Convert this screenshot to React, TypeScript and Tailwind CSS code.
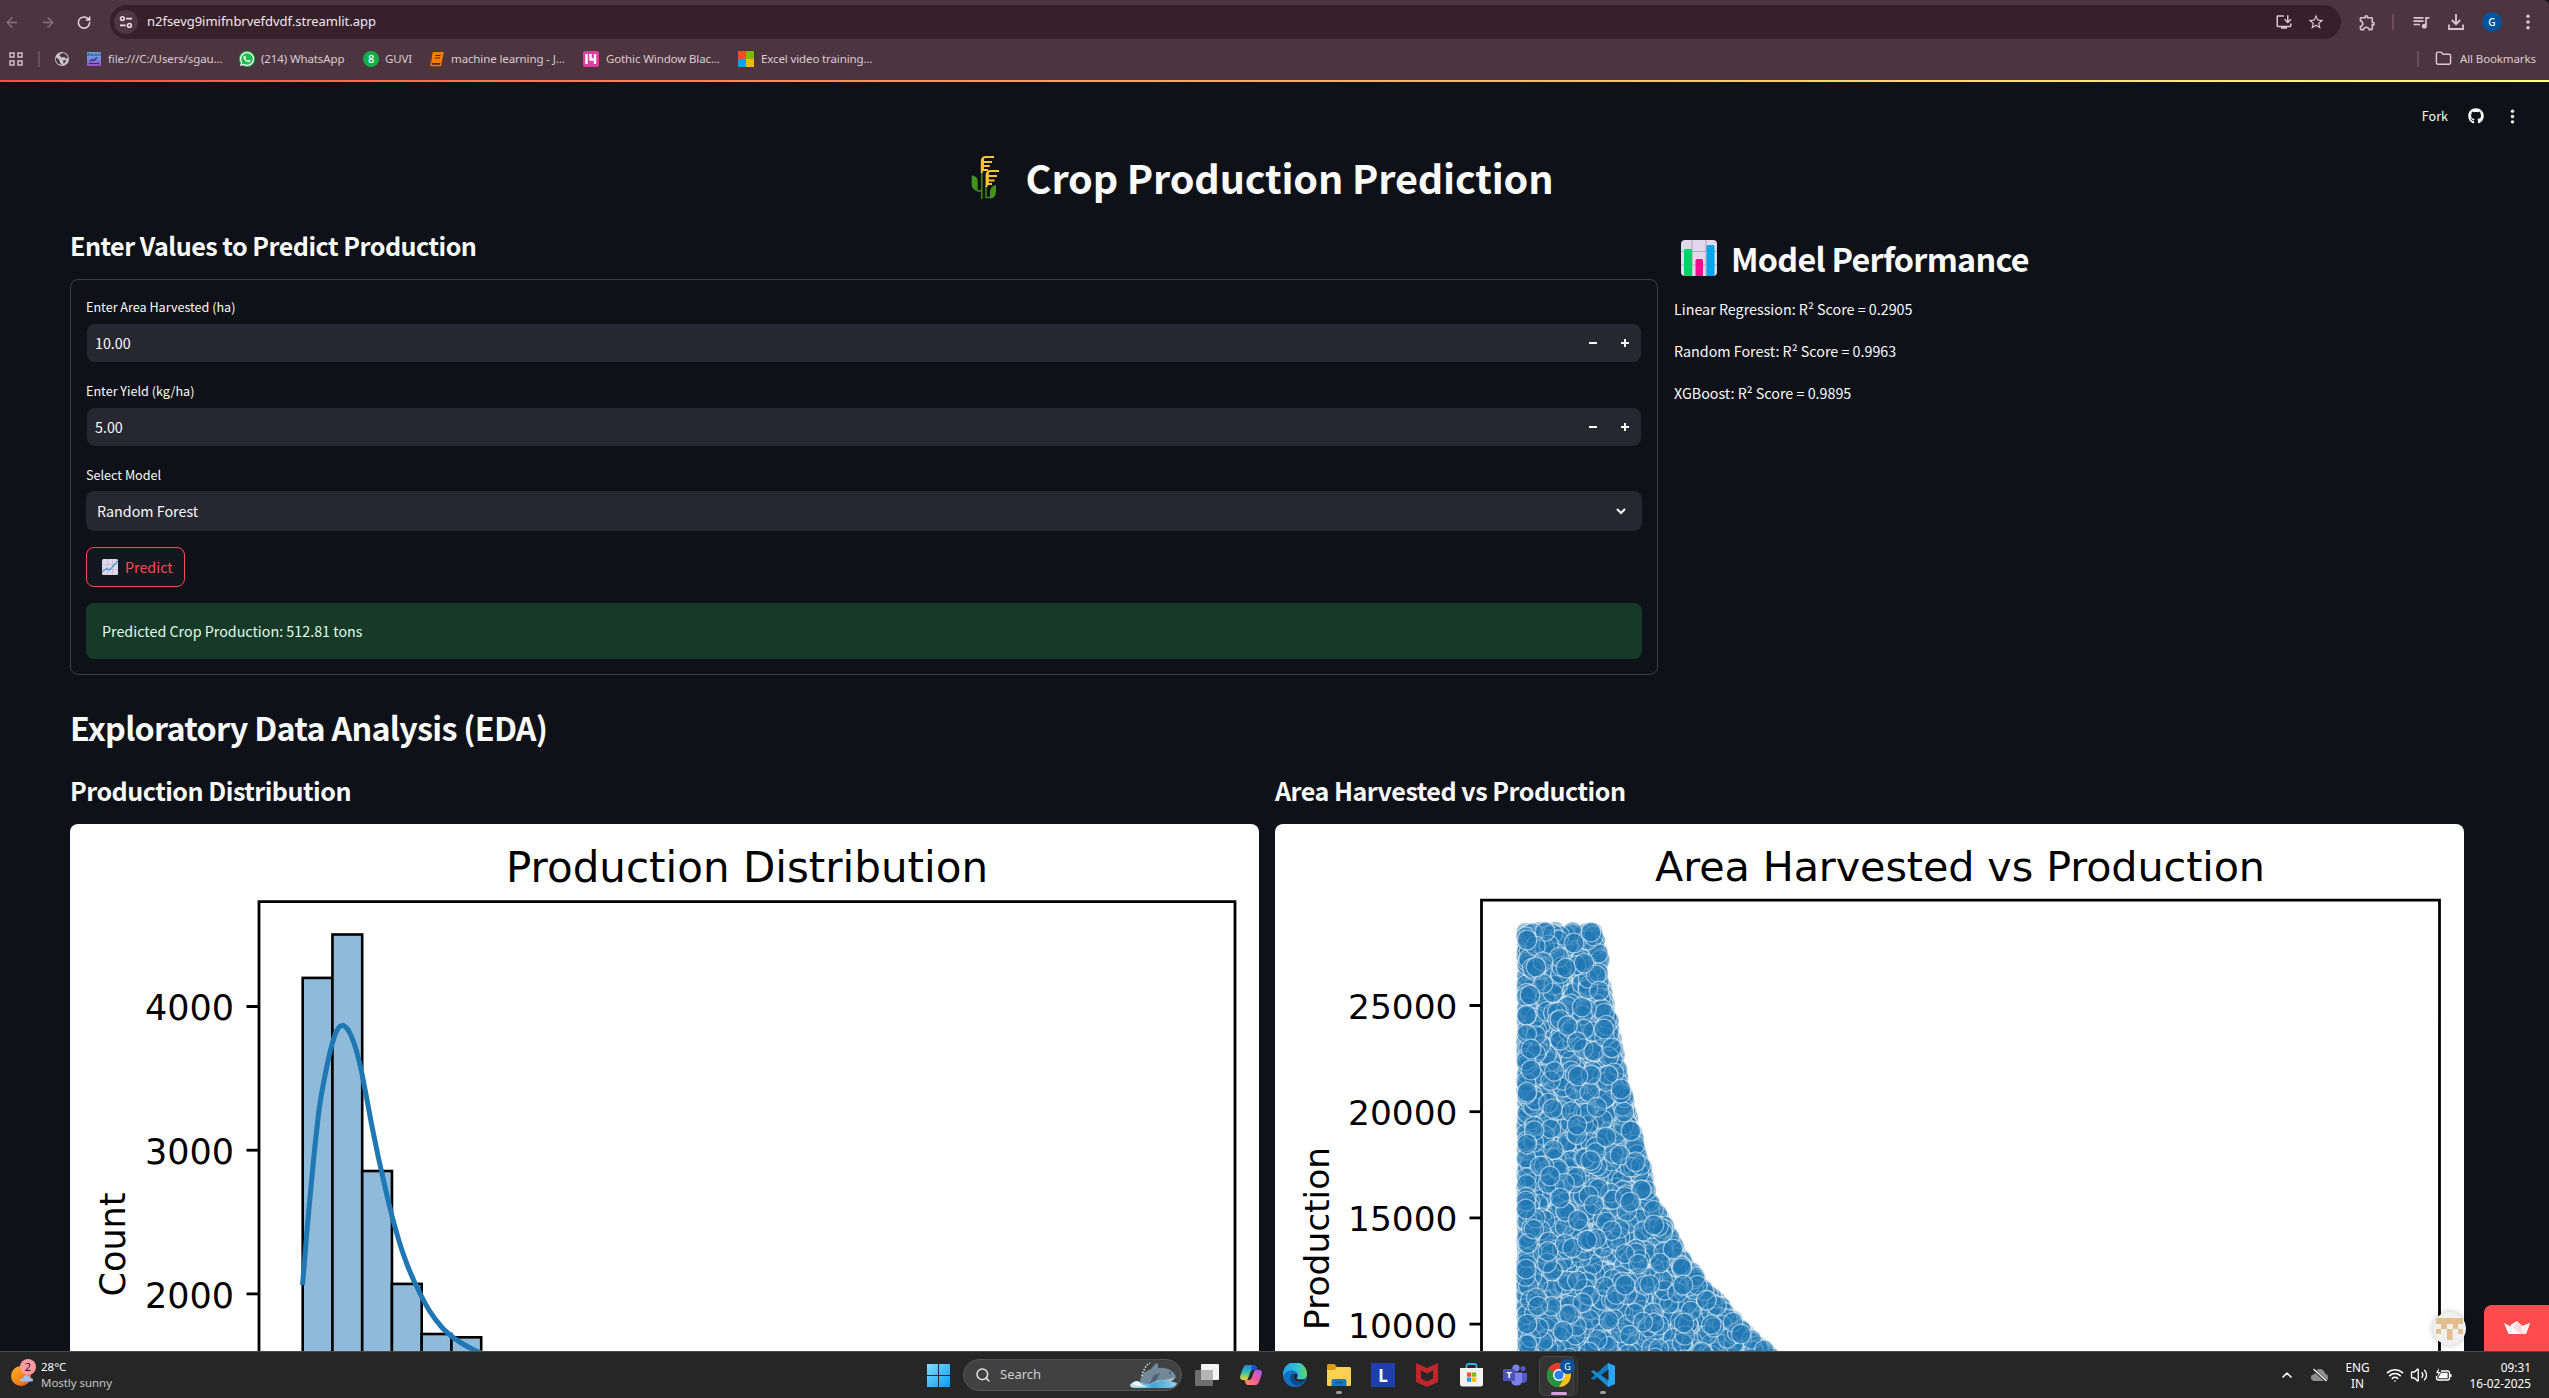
import React from "react";
import { FaWhatsapp, FaGithub } from "react-icons/fa";
import { MdOutlineInstallDesktop, MdStarBorder, MdOutlineExtension, MdQueueMusic } from "react-icons/md";
import { ArrowLeft, ArrowRight, RotateCw, Folder, Search, Wifi, Volume2, ChevronUp } from "lucide-react";

const SANS = "font-['Noto_Sans_CJK_SC','Noto_Sans',sans-serif]";
const UI = "font-['Noto_Sans','Open_Sans',sans-serif]";

function VDots({ className }: { className: string }) {
  return (
    <svg viewBox="0 0 4 16" className={className} fill="currentColor">
      <circle cx="2" cy="2.3" r="1.8" />
      <circle cx="2" cy="8" r="1.8" />
      <circle cx="2" cy="13.7" r="1.8" />
    </svg>
  );
}

/* ---------- Browser chrome ---------- */

function Bookmark({ icon, label, width, gap }: { icon: React.ReactNode; label: string; width: string; gap: string }) {
  return (
    <div className={`flex shrink-0 items-center ${gap}`}>
      <span className="flex h-4 w-4 items-center justify-center">{icon}</span>
      <span className={`whitespace-nowrap ${width}`}>{label}</span>
    </div>
  );
}

function BrowserBar() {
  return (
    <div className={`flex h-20 flex-col rounded-tr-md bg-[#4d3540] text-[#dcc5d0] ${UI}`}>
      <div className="flex h-[44px] items-center pl-1">
        <ArrowLeft className="h-[17px] w-4 text-[#8b7080]" strokeWidth={2} />
        <ArrowRight className="ml-5 h-[17px] w-4 text-[#8b7080]" strokeWidth={2} />
        <RotateCw className="ml-5 h-[15px] w-4 text-[#e8d3dd]" strokeWidth={2.4} />
        <div className="ml-[18px] flex h-[34px] w-[2231px] items-center rounded-full bg-[#36202a] pr-4 pl-1">
          <span className="flex h-6 w-6 items-center justify-center rounded-full bg-[#4d3842]">
            <svg viewBox="0 0 14 14" className="h-3.5 w-3.5" fill="none" stroke="#ecd9e2" strokeWidth="1.6">
              <circle cx="3.4" cy="3.6" r="1.9" />
              <path d="M7.2 3.6H13M1 10.4h5.6" />
              <circle cx="10.4" cy="10.4" r="1.9" />
            </svg>
          </span>
          <span className="ml-[9px] text-[13px] tracking-[-0.02px] text-[#f3e6ec]">n2fsevg9imifnbrvefdvdf.streamlit.app</span>
          <MdOutlineInstallDesktop className="ml-auto h-[18px] w-[18px]" />
          <MdStarBorder className="ml-[14px] h-[18px] w-[18px]" />
        </div>
        <MdOutlineExtension className="ml-[17px] h-[19px] w-[19px]" />
        <span className="ml-[15px] h-4 w-0.5 bg-[#6b4f5d]" />
        <MdQueueMusic className="ml-[17px] h-5 w-5" />
        <svg viewBox="0 0 16 16" className="ml-[17px] h-4 w-4" fill="none" stroke="currentColor" strokeWidth="1.8">
          <path d="M8 0v10M3.8 6 8 10.2 12.2 6M1 10.5V15h14v-4.500" />
        </svg>
        <span className="ml-[18px] flex h-5 w-5 items-center justify-center rounded-full bg-[#04539c] text-[10px] font-medium text-white">G</span>
        <VDots className="ml-[18px] h-4 w-4" />
      </div>
      <div className="-mt-px flex h-[31px] items-center pl-[9px] text-[11.500px] tracking-[-0.12px] text-[#dccbd3]">
        <svg viewBox="0 0 14 14" className="h-3.5 w-3.5" fill="none" stroke="#cfc0c8" strokeWidth="1.5">
          <path d="M1 1h4v4H1zM9 1h4v4H9zM1 9h4v4H1zM9 9h4v4H9z" />
        </svg>
        <span className="ml-[15px] h-4 w-0.5 bg-[#66505b]" />
        <svg viewBox="0 0 14 14" className="ml-[15px] h-3.5 w-3.5">
          <circle cx="7" cy="7" r="7" fill="#c9c4c8" />
          <path d="M1 5.500 4 7.500l1 3 2 2.500-4.500-1.500L.8 8zM6 1.500l-1.500 2 2 2 3-.5 1 1.500 2.500-.500-1-2.500L9 1z" fill="#4d3540" />
          <path d="M8 8.500l3-.8-1 3-1.500.8z" fill="#4d3540" />
        </svg>
        <div className="ml-[17px] flex">
          <Bookmark
            label="file:///C:/Users/sgau..."
            width="w-[131px]"
            gap="gap-[6px]"
            icon={
              <svg viewBox="0 0 14 14" className="h-3.5 w-3.5">
                <defs>
                  <linearGradient id="cal" x1="0" y1="0" x2="0" y2="1">
                    <stop offset="0" stopColor="#5fb6ef" />
                    <stop offset="1" stopColor="#9b4fc4" />
                  </linearGradient>
                </defs>
                <rect width="14" height="14" rx="1" fill="url(#cal)" />
                <path d="M0 3h14M2 .5v2M5 .5v2M9 .5v2M12 .5v2" stroke="#28507e" />
                <path d="M2 11.500h10M3 9.500l2-2 2 1 3-3" stroke="#32306e" strokeWidth="1.200" fill="none" />
              </svg>
            }
          />
          <Bookmark
            label="(214) WhatsApp"
            width="w-[102px]"
            gap="gap-[6px]"
            icon={
              <span className="flex h-4 w-4 items-center justify-center rounded-full bg-[#1fbd4c] text-white">
                <FaWhatsapp className="h-4 w-4" />
              </span>
            }
          />
          <Bookmark
            label="GUVI"
            width="w-[44px]"
            gap="gap-[6px]"
            icon={<span className="flex h-4 w-4 items-center justify-center rounded-full bg-[#12b04c] text-[11px] leading-none font-medium text-white">8</span>}
          />
          <Bookmark
            label="machine learning - J..."
            width="w-[132px]"
            gap="gap-[6px]"
            icon={
              <svg viewBox="0 0 16 16" className="h-4 w-4">
                <path d="M4.500 1H14q1 0 .7 1L12.500 12H2L3.500 2q.2-1 1-1z" fill="#f57c00" />
                <path d="M2 12q-.8 2.500 1 2.500h8.500L12 12" stroke="#f57c00" fill="none" strokeWidth="1.400" />
                <path d="M6.500 4.500h5M6 7h5M3 12.600h8" stroke="#51280a" fill="none" strokeWidth="1.100" />
              </svg>
            }
          />
          <Bookmark
            label="Gothic Window Blac..."
            width="w-[132px]"
            gap="gap-[7px]"
            icon={
              <svg viewBox="0 0 16 16" className="h-4 w-4">
                <rect width="16" height="16" rx="2" fill="#df3c9b" />
                <path d="M3.500 3v10M7.500 3v5.500h4M12 3v10" stroke="#fff" strokeWidth="2.400" fill="none" />
              </svg>
            }
          />
          <Bookmark
            label="Excel video training..."
            width="w-[130px]"
            gap="gap-[7px]"
            icon={
              <svg viewBox="0 0 16 16" className="h-4 w-4">
                <path d="M0 0h8v8H0z" fill="#f25022" />
                <path d="M8 0h8v8H8z" fill="#7fba00" />
                <path d="M0 8h8v8H0z" fill="#00a4ef" />
                <path d="M8 8h8v8H8z" fill="#ffb900" />
              </svg>
            }
          />
        </div>
        <span className="ml-auto h-4 w-0.5 bg-[#66505b]" />
        <Folder className="ml-[16px] h-[17px] w-[17px]" strokeWidth={2} />
        <span className="mr-[13px] ml-[8px] w-[76px] whitespace-nowrap">All Bookmarks</span>
      </div>
    </div>
  );
}

/* ---------- Emoji drawings ---------- */

function RiceIcon() {
  return (
    <svg viewBox="0 0 28 44" className="h-11 w-7" fill="none">
      <path d="M.7 20.500q6 .5 6 6V36q-6-1-6-7z" fill="#44931c" />
      <path d="M10.800 17v27M6 35.800h4" stroke="#3a8217" strokeWidth="1.700" />
      <path d="M15 30v12.500h4.500" stroke="#3a8217" strokeWidth="1.700" />
      <path d="M25 30q-6 1-6 7v6.500q6-.5 6-7z" fill="#44931c" />
      <path d="M10.800 18V6.500Q10.800 2 15 2h8M10.800 7H21M10.800 11h8M12.500 15h4.500M12 3v13" stroke="#fdc335" strokeWidth="2" />
      <path d="M15.600 32V20.500q0-4.500 4.200-4.500H28M15.600 21H26M15.600 25.500h8M15.600 29h5.400M16.800 17v13" stroke="#fdc335" strokeWidth="2" />
    </svg>
  );
}

function BarChartIcon() {
  return (
    <svg viewBox="0 0 36 36" className="h-9 w-9">
      <rect width="36" height="36" rx="4" fill="#e1d8ec" />
      <path d="M11 0v36M25 0v36M0 11.500h36M0 25h36" stroke="#b4acbc" strokeWidth="1.200" />
      <path d="M3 36V10.500q0-1.500 1.500-1.500h5Q11 9 11 10.500V36z" fill="#00d26a" />
      <path d="M14.500 36V20.500q0-1.500 1.500-1.500h4.500q1.500 0 1.500 1.500V36z" fill="#f70a8d" />
      <path d="M25.500 36V6.500Q25.500 5 27 5h5q1.500 0 1.500 1.500V36z" fill="#00a6ed" />
    </svg>
  );
}

function TrendIcon() {
  return (
    <svg viewBox="0 0 16 16" className="h-4 w-4">
      <rect width="16" height="16" rx="1.500" fill="#e1d8ec" />
      <path d="M5.500 0v16M10.500 0v16M0 5.500h16M0 10.500h16" stroke="#bdb4c8" strokeWidth=".7" />
      <path d="M0 13l4.500-3.500L7 11l3-2.500L15.800 2" stroke="#3a9be6" strokeWidth="1.200" fill="none" />
    </svg>
  );
}

/* ---------- Form ---------- */

function NumberField({ label, value, className }: { label: string; value: string; className: string }) {
  return (
    <div className={className}>
      <div className="h-[23px] text-[12.600px] leading-[23px]">{label}</div>
      <div className="mx-px mt-1.5 flex h-[38px] items-center rounded-lg bg-[#262730] pl-2">
        <span className="text-[14.300px] leading-[38px]">{value}</span>
        <svg viewBox="0 0 8 8" className="ml-auto h-2 w-2" stroke="#fafafa" strokeWidth="2">
          <path d="M0 4h8" />
        </svg>
        <svg viewBox="0 0 8 8" className="mr-3 ml-6 h-2 w-2" stroke="#fafafa" strokeWidth="2">
          <path d="M0 4h8M4 0v8" />
        </svg>
      </div>
    </div>
  );
}

/* ---------- Charts ---------- */

const BAR_TOPS = [977.9, 934.5, 1171, 1283.9, 1334, 1337.3];

const KDE =
  "M232.700 458.600C235 434 236.500 410 238.900 385.800S241.900 353 243.400 337.400 246.400 309.500 247.900 295.300 250.700 275 252.300 265.800 255.200 250.400 256.800 242.700 259.700 228.500 261.700 221.600C263.500 215 265 209.500 267.100 206.100 268.700 203 270.600 201.400 272.400 201.400S276.200 203 278.200 206.100C280.200 209.500 281.800 213 283.600 217.900 286 224.500 288.200 233 290.300 241.800 292 249.500 293 255 294.700 263.700 297 275.500 299 287 301.400 299.500 303.600 310.500 306 321.500 308.100 332.300L312.600 352.100C315.500 366 319 379.500 322 392.100 324.800 403 327.800 412.500 330.400 421.600 332.600 428.500 334.700 434.300 337.100 440.500 340.500 449.500 344 457.500 348.300 465.700 352 473.500 355.500 480.500 359.500 486.800 363.500 493.200 368.300 499.300 372.900 504.500 375.500 507.300 378.500 509.600 381.300 512 388 517.500 396 522 404.100 526L420 533";

function HistogramChart() {
  return (
    <svg viewBox="0 0 1189 527" className="block h-[527px] w-full rounded-t-lg bg-white" fontFamily="DejaVu Sans, sans-serif">
      <g fill="#8fbad9" stroke="#000" strokeWidth="2.600">
        {BAR_TOPS.map((top, i) => (
          <rect key={i} x={232.7 + i * 29.75} y={top - 824} width={29.75} height={620 - (top - 824)} />
        ))}
      </g>
      <path d={KDE} fill="none" stroke="#1f77b4" strokeWidth="5" strokeLinecap="square" strokeLinejoin="round" />
      <path d="M189 560V77.700H1165V560" fill="none" stroke="#000" strokeWidth="2.800" />
      <text x="677" y="57.500" fontSize="42" textAnchor="middle" textLength="482">
        Production Distribution
      </text>
      {[4000, 3000, 2000].map((v, i) => (
        <g key={v}>
          <path d={`M176.500 ${182.5 + i * 143.7}h12`} stroke="#000" strokeWidth="2.800" />
          <text x="164" y={196 + i * 143.9} fontSize="35" textAnchor="end">
            {v}
          </text>
        </g>
      ))}
      <text transform="translate(54.500 420.500) rotate(-90)" fontSize="35" textAnchor="middle">
        Count
      </text>
    </svg>
  );
}

const EDGE: [number, number][] = [
  [107, 319], [125, 324], [151, 327], [172, 330], [209, 337], [240, 343], [270, 349], [285, 353], [315, 360],
  [345, 368], [375, 374], [392, 386], [412, 396], [431, 404], [450, 419], [473, 438], [499, 463], [518, 481], [548, 515],
];

function edgeAt(y: number) {
  for (let i = 1; i < EDGE.length; i++) {
    const [y0, x0] = EDGE[i - 1];
    const [y1, x1] = EDGE[i];
    if (y <= y1) return x0 + ((x1 - x0) * (y - y0)) / (y1 - y0);
  }
  return EDGE[EDGE.length - 1][1];
}

function makePoints() {
  let seed = 20250216;
  const rnd = () => {
    seed = (seed * 1664525 + 1013904223) >>> 0;
    return seed / 4294967296;
  };
  const pts: [number, number][] = [];
  for (let y = 108; y < 548; y += 4) {
    pts.push([250.5 + rnd() * 1.5, y + rnd() * 3]);
    pts.push([edgeAt(y) - rnd() * 5, y + rnd() * 3]);
  }
  while (pts.length < 2500) {
    const y = 107 + rnd() * 441;
    const x = 251 + rnd() * 264;
    if (x <= edgeAt(y)) pts.push([x, y]);
  }
  for (let i = pts.length - 1; i > 0; i--) {
    const j = Math.floor(rnd() * (i + 1));
    [pts[i], pts[j]] = [pts[j], pts[i]];
  }
  return pts;
}

const POINTS = makePoints();

/* Small clusters of coincident samples read as solid discs. */
const DENSE: [number, number][] = [
  [252, 116], [316, 108], [299, 119], [261, 143], [291, 144], [309, 139], [255, 171], [307, 183], [329, 205],
  [256, 225], [256, 246], [303, 252], [252, 268], [346, 265], [302, 301], [331, 313], [356, 307], [275, 352],
  [285, 374], [355, 378], [251, 385], [303, 396], [379, 401], [312, 416], [398, 425], [251, 445], [385, 439],
  [408, 461], [350, 461], [252, 500], [409, 499], [288, 507], [466, 510],
];

function ScatterChart() {
  return (
    <svg viewBox="0 0 1189 527" className="block h-[527px] w-full rounded-t-lg bg-white" fontFamily="DejaVu Sans, sans-serif">
      <g fill="#1f77b4" fillOpacity=".5" stroke="#fff" strokeOpacity=".5" strokeWidth="1.300">
        {POINTS.map(([x, y], i) => (
          <circle key={i} cx={x.toFixed(1)} cy={y.toFixed(1)} r="9.800" />
        ))}
      </g>
      <g fill="#1f77b4" fillOpacity=".65" stroke="#fff" strokeOpacity=".5" strokeWidth="1.300">
        {DENSE.map(([x, y], i) => (
          <circle key={i} cx={x} cy={y} r="9.800" />
        ))}
      </g>
      <path d="M206.500 560V76.200H1164.500V560" fill="none" stroke="#000" strokeWidth="2.800" />
      <text x="685" y="56.500" fontSize="41.300" textAnchor="middle" textLength="610">
        Area Harvested vs Production
      </text>
      {[25000, 20000, 15000, 10000].map((v, i) => (
        <g key={v}>
          <path d={`M194.500 ${181.5 + i * 106.2}h12`} stroke="#000" strokeWidth="2.800" />
          <text x="182.500" y={194.6 + i * 106.3} fontSize="34.400" textAnchor="end">
            {v}
          </text>
        </g>
      ))}
      <text transform="translate(54 414.500) rotate(-90)" fontSize="34.400" textAnchor="middle">
        Production
      </text>
    </svg>
  );
}

/* ---------- App content ---------- */

const SCORES = [
  ["Linear Regression", "0.2905"],
  ["Random Forest", "0.9963"],
  ["XGBoost", "0.9895"],
];

function StreamlitPage() {
  return (
    <div className={`relative h-[1269px] overflow-hidden bg-[#0e1117] text-[#fafafa] ${SANS}`}>
      <div className="flex h-[68px] items-center justify-end pr-[29px]">
        <span className="text-[12.600px]">Fork</span>
        <FaGithub className="ml-5 h-4 w-4" />
        <VDots className="ml-[21px] h-[15px] w-[15px]" />
      </div>

      <div className="flex h-[54px] items-center justify-center gap-[27px] pr-[25px]">
        <RiceIcon />
        <h1 className="text-[39.600px] leading-[54px] font-bold tracking-[-0.15px]">Crop Production Prediction</h1>
      </div>

      <div className="flex gap-4 pl-[70px]">
        <div className="w-[1588px]">
          <h3 className="mt-[7px] h-[68px] text-[25.100px] leading-[68px] font-semibold tracking-[-0.5px]">Enter Values to Predict Production</h3>
          <div className="rounded-lg border border-[#3d4044] px-[15px] py-[15px]">
            <NumberField label="Enter Area Harvested (ha)" value="10.00" className="" />
            <NumberField label="Enter Yield (kg/ha)" value="5.00" className="mt-[17px]" />
            <div className="mt-[17px] h-[23px] text-[12.600px] leading-[23px]">Select Model</div>
            <div className="mt-[5px] flex h-10 items-center justify-between rounded-lg bg-[#262730] pr-4 pl-[11px]">
              <span className="text-[14.300px] leading-10">Random Forest</span>
              <svg viewBox="0 0 10 8" className="h-2 w-2.5" fill="none" stroke="#fafafa" strokeWidth="2">
                <path d="M1 2l4 4 4-4" />
              </svg>
            </div>
            <div className="mt-4 flex h-10 w-[99px] items-center gap-[7px] rounded-lg border border-[#ff4b4b] bg-[#131720] pl-[15px] text-[14.300px] text-[#ff4b4b]">
              <TrendIcon />
              <span>Predict</span>
            </div>
            <div className="mt-4 h-14 rounded-lg bg-[#173928] pl-4 text-[14.300px] leading-[56px] text-[#dffde9]">
              Predicted Crop Production: 512.81 tons
            </div>
          </div>
        </div>
        <div>
          <h2 className="mt-7 flex h-[52px] items-center gap-[14px] pl-[7px] text-[32.300px] leading-[52px] font-semibold tracking-[-0.72px]">
            <BarChartIcon />
            Model Performance
          </h2>
          <div className="mt-1 text-[14.300px] leading-[41.800px]">
            {SCORES.map(([name, score]) => (
              <p key={name}>
                {name}: R² Score = {score}
              </p>
            ))}
          </div>
        </div>
      </div>

      <h2 className="mt-[26px] h-[52px] pl-[70px] text-[32.300px] leading-[52px] font-semibold tracking-[-0.72px]">
        Exploratory Data Analysis (EDA)
      </h2>

      <div className="grid grid-cols-2 gap-4 pr-[85px] pl-[70px]">
        <div>
          <h3 className="h-[70.500px] pt-0.5 text-[25.100px] leading-[70px] font-semibold tracking-[-0.5px]">Production Distribution</h3>
          <HistogramChart />
        </div>
        <div>
          <h3 className="h-[70.500px] pt-0.5 text-[25.100px] leading-[70px] font-semibold tracking-[-0.5px]">Area Harvested vs Production</h3>
          <ScatterChart />
        </div>
      </div>

      <div className="absolute right-0 bottom-0 flex items-end">
        <span className="mr-[18px] mb-[6px] flex h-[33px] w-[33px] items-center justify-center rounded-full bg-[#f0f0f0] shadow-[0_0_6px_rgba(0,0,0,0.25)]">
          <svg viewBox="0 0 27 22" className="h-[22px] w-[27px]" fill="#e3bf8f">
            <path d="M0 0h27v6H22v5h-5v-5h-6v5H5V6H0zM0 11h5v5H0zM22 11h5v5h-5zM11 11h5.500v11H11z" />
          </svg>
        </span>
        <span className="flex h-[46px] w-[65px] items-center justify-center rounded-tl-lg bg-[#ff4b4b]">
          <svg viewBox="0 0 26 14" className="h-3.5 w-[26px]">
            <path d="M13 0 18 6 9 11 6.500 4z" fill="#fff" />
            <path d="M0 2l8.500 4.500L18 13H4.500z" fill="#fff" />
            <path d="M13 0l5.500 5L26 2l-4 11h-4L9 7z" fill="#ffd9dc" />
            <path d="M26 2l-8 3-1 4 3 4h2z" fill="#ffeef0" />
          </svg>
        </span>
      </div>
    </div>
  );
}

/* ---------- Taskbar ---------- */

function Cell({ children, dot }: { children: React.ReactNode; dot?: boolean }) {
  return (
    <div className="relative flex h-full w-11 items-center justify-center">
      {children}
      {dot && <span className="absolute bottom-[4px] left-[19px] h-[3px] w-1.5 rounded-full bg-[#9a9a9a]" />}
    </div>
  );
}

function Whale() {
  return (
    <svg viewBox="0 0 48 26" className="h-[26px] w-12">
      <defs>
        <linearGradient id="sea" x1="0" y1="0" x2="1" y2="0">
          <stop offset="0" stopColor="#c9ecfa" />
          <stop offset=".5" stopColor="#3fa4d6" />
          <stop offset="1" stopColor="#8fd0ee" />
        </linearGradient>
      </defs>
      <path d="M10 18Q13 9 21 7l5-6 2 1v4q9-1 15 4l3 4q-1 5-9 7l-19 2q-8 0-8-5z" fill="#71889a" />
      <path d="M20 18q12 2 25-3-2 5-10 6l-14 1z" fill="#a9bac5" />
      <path d="M30 11l-4 8-7 3 5-9z" fill="#4c6274" />
      <circle cx="40" cy="11" r=".8" fill="#1d2830" />
      <path d="M12 14l1-4 2-4 2-3 3-2" stroke="#eef8fd" strokeWidth="1.400" strokeDasharray="1.500 1.500" fill="none" />
      <path d="M0 23q5-6 10-3 8 4 16 0 10-3 21 1-1 5-9 5H6q-6 0-6-3z" fill="url(#sea)" />
      <path d="M2 22q5-5 8-1t10 3q-9 2-18-2z" fill="#f2fbff" />
    </svg>
  );
}

function ChromeLogo() {
  return (
    <svg viewBox="0 0 24 24" className="h-6 w-6">
      <circle cx="12" cy="12" r="12" fill="#fbc116" />
      <path d="M1.600 6A12 12 0 0 0 12 24l5.200-9L12 12z" fill="#229342" />
      <path d="M1.600 6A12 12 0 0 1 22.400 6H12a6 6 0 0 0-5.200 9z" fill="#e33b2e" />
      <path d="M1.600 6 6.800 15 12 12z" fill="#229342" />
      <circle cx="12" cy="12" r="6" fill="#fff" />
      <circle cx="12" cy="12" r="4.600" fill="#2f7de9" />
    </svg>
  );
}

function Taskbar() {
  return (
    <div className={`flex h-[47px] border-t border-[#4a4a4a] bg-[#262626] text-white ${UI}`}>
      <div className="flex w-[927px] items-center pl-[11px]">
        <div className="relative -mt-1 h-7 w-[26px]">
          <svg viewBox="0 0 26 28" className="h-7 w-[26px]">
            <defs>
              <linearGradient id="sun" x1="0" y1="0" x2="1" y2="1">
                <stop offset="0" stopColor="#fdb528" />
                <stop offset="1" stopColor="#ea5b0c" />
              </linearGradient>
            </defs>
            <circle cx="10" cy="17" r="10" fill="url(#sun)" />
            <circle cx="17" cy="8" r="8" fill="#ff9aa2" />
            <path d="M9 22.500q-1-3 3-3 1-4 5-3 2 1 2 2.500 3 0 3 2t-2 1.500z" fill="#9cc3f4" />
          </svg>
          <span className="absolute top-0 left-[9px] w-4 text-center text-[11px] leading-4 text-[#2a1416]">2</span>
        </div>
        <div className="ml-1 text-[11.500px] leading-4">
          <div>28°C</div>
          <div className="tracking-[-0.05px] text-[#c4c4c4]">Mostly sunny</div>
        </div>
      </div>

      <div className="flex items-center">
        <svg viewBox="0 0 23 23" className="h-[23px] w-[23px]">
          <defs>
            <linearGradient id="win" x1="0" y1="0" x2="1" y2="1">
              <stop offset="0" stopColor="#7fdcff" />
              <stop offset="1" stopColor="#0a9bf5" />
            </linearGradient>
          </defs>
          <path d="M0 0h11v11H0zM12 0h11v11H12zM0 12h11v11H0zM12 12h11v11H12z" fill="url(#win)" />
        </svg>
        <div className="ml-[13px] flex h-8 w-[219px] items-center rounded-full border border-[#565656] bg-[#414141] pr-[3px] pl-[11px]">
          <Search className="h-4 w-4 text-[#e6e6e6]" strokeWidth={2.2} />
          <span className="ml-[9px] text-[13px] text-[#cfcfcf]">Search</span>
          <span className="ml-auto">
            <Whale />
          </span>
        </div>
        <div className="ml-[3px] flex h-full">
          <Cell>
            <svg viewBox="0 0 24 22" className="h-[22px] w-6">
              <rect x="6" width="18" height="16" rx="1" fill="#f3f3f3" />
              <rect y="6" width="18" height="16" rx="1" fill="#6f6f6f" />
              <rect x="6" y="6" width="12" height="10" fill="#b5b5b5" />
            </svg>
          </Cell>
          <Cell>
            <svg viewBox="0 0 22 20" className="h-5 w-[22px]">
              <defs>
                <linearGradient id="cpa" x1="0" y1="0" x2="0" y2="1">
                  <stop offset="0" stopColor="#2a7de6" />
                  <stop offset=".5" stopColor="#34c3a4" />
                  <stop offset="1" stopColor="#ffd02e" />
                </linearGradient>
                <linearGradient id="cpb" x1="1" y1="0" x2="0" y2="1">
                  <stop offset="0" stopColor="#a55cf0" />
                  <stop offset=".5" stopColor="#f0589a" />
                  <stop offset="1" stopColor="#ff9a4a" />
                </linearGradient>
              </defs>
              <path d="M6 0h8q2 0 2.700 2.500L17.500 5H13q-2 0-2.700 2L8 13.500Q7.500 15 6 15H3Q-1 15 .5 10L3 3q1-3 3-3z" fill="url(#cpa)" />
              <path d="M16 20H8q-2 0-2.700-2.500L4.500 15H9q2 0 2.700-2L14 6.500Q14.500 5 16 5h3q4 0 2.500 5L19 17q-1 3-3 3z" fill="url(#cpb)" />
              <path d="M12 0h2q2 0 2.700 2.500L17.500 5H13q-1 0-1.700.5z" fill="#1b4fd0" />
            </svg>
          </Cell>
          <Cell>
            <svg viewBox="0 0 24 24" className="h-6 w-6">
              <defs>
                <linearGradient id="edg" x1="0" y1="0" x2="1" y2="0">
                  <stop offset="0" stopColor="#1e9ee8" />
                  <stop offset=".6" stopColor="#35c1d8" />
                  <stop offset="1" stopColor="#62d658" />
                </linearGradient>
              </defs>
              <circle cx="12" cy="12" r="12" fill="#1272c4" />
              <path d="M0 11A12 12 0 0 1 24 11q0 5-6 5.500-4 .3-4.500-1.500 2-2 1-4.500Q12.500 7 8 7.200 2.500 8 0 13z" fill="url(#edg)" />
              <path d="M8 11q-3 8 5 12 6-1 9-5.500-5 2.500-9.500 0Q9 15 10 11q-1-1-2 0z" fill="#0b4a91" />
              <path d="M13.500 15q.5 1.800 4.500 1.500h4.500l-.6 1.300q-5 2-9.100-.3-2.800-2-2.500-5.500 2.500-2 4-.5 1 1.500-.8 3.500z" fill="#262626" />
            </svg>
          </Cell>
          <Cell dot>
            <svg viewBox="0 0 24 22" className="h-[22px] w-6">
              <path d="M0 1.500Q0 0 1.500 0h6L10 3h12v6H0z" fill="#d99a12" />
              <rect y="3" width="24" height="19" rx="1.500" fill="#fcd050" />
              <path d="M0 3V6h7.500L10 3z" fill="#d99a12" />
              <path d="M4.500 22v-5q0-2 2-2h11q2 0 2 2v5z" fill="#1279c6" />
              <path d="M8 18.500h8" stroke="#0a5693" strokeWidth="1.500" />
            </svg>
          </Cell>
          <Cell>
            <span className="flex h-6 w-6 items-center justify-center bg-[#1f3fae] text-[17px] leading-none font-bold text-white">L</span>
          </Cell>
          <Cell>
            <svg viewBox="0 0 22 24" className="h-6 w-[22px]">
              <path d="M0 0 11 5 22 0V19L11 24 0 19zM5 7.500V15.500L11 18.500l6-3V7.500L11 10.500z" fill="#c0272d" fillRule="evenodd" />
            </svg>
          </Cell>
          <Cell>
            <svg viewBox="0 0 23 24" className="h-6 w-[23px]">
              <path d="M6.500 6V3q0-2 2-2h6q2 0 2 2v3" fill="none" stroke="#28b4f0" strokeWidth="1.800" />
              <path d="M0 5h23v16q0 2.500-2.500 2.500h-18Q0 23.500 0 21z" fill="#f2f2f2" />
              <path d="M7 9.500h4.200v4.200H7z" fill="#f25022" />
              <path d="M12 9.500h4.200v4.200H12z" fill="#7fba00" />
              <path d="M7 14.500h4.200v4.200H7z" fill="#00a4ef" />
              <path d="M12 14.500h4.200v4.200H12z" fill="#ffb900" />
            </svg>
          </Cell>
          <Cell>
            <div className="relative">
              <svg viewBox="0 0 24 22" className="h-[22px] w-6">
                <circle cx="13" cy="4" r="3.600" fill="#7b83eb" />
                <circle cx="20" cy="4.600" r="2.600" fill="#5059c9" />
                <path d="M16 9h8v6q0 4-4 4h-4z" fill="#5059c9" />
                <path d="M8 8.500h11V16q0 5.500-5.500 5.500T8 16z" fill="#7b83eb" />
                <rect y="5" width="12" height="12" rx="1" fill="#4b53bc" />
              </svg>
              <span className="absolute top-[5px] left-0 w-3 text-center text-[9px] leading-3 font-bold">T</span>
            </div>
          </Cell>
          <div className="relative flex h-full w-11 items-center justify-center">
            <span className="absolute top-[4px] left-[2px] h-[40px] w-[39px] rounded-md border border-[#3d3d3d] bg-[#2e2e2e]" />
            <span className="absolute top-[4px] left-[2px] h-[40px] w-[35px] rounded-md border border-[#484848] bg-[#343434]" />
            <span className="relative">
              <ChromeLogo />
            </span>
            <span className="absolute top-[7px] left-[23px] flex h-[15px] w-[15px] items-center justify-center rounded-full bg-[#04539c] text-[9px]">G</span>
            <span className="absolute top-[40px] left-[14px] h-[3px] w-4 rounded-full bg-[#d7a0e0]" />
          </div>
          <Cell dot>
            <svg viewBox="0 0 24 24" className="h-6 w-6">
              <path d="M17 0 24 3v18l-7 3L6.500 14 2.500 17 0 15.500 13 3.500z" fill="#1279bd" />
              <path d="M0 8.500 2.500 7 17.500 18.500V24L0 8.500z" fill="#1c8ad0" />
              <path d="M17 0l7 3v18l-7 3z" fill="#2aa5f0" />
              <path d="M17.500 6.500v11L10 12z" fill="#262626" />
              <path d="M0 10.500 3 12 0 13.500z" fill="#262626" />
            </svg>
          </Cell>
        </div>
      </div>

      <div className="ml-auto flex items-center pr-[18px] text-[11.800px] leading-4">
        <ChevronUp className="h-4 w-4" strokeWidth={2.4} />
        <svg viewBox="0 0 17 14" className="ml-4 h-3.5 w-[17px]">
          <path d="M3 13q-3-.5-3-3.500T3.500 6Q5 1 9 1t5 4.500q3 .5 3 4t-3 3.500z" fill="#8d8d8d" />
          <path d="M2 1l13 12" stroke="#262626" strokeWidth="2.500" />
          <path d="M2.500 1l13 12" stroke="#fff" strokeWidth="1.200" />
        </svg>
        <div className="ml-[16px] w-[27px] text-center">
          <div>ENG</div>
          <div>IN</div>
        </div>
        <Wifi className="ml-[15px] h-[18px] w-[18px]" strokeWidth={2.2} />
        <Volume2 className="ml-[6px] h-[18px] w-[18px]" strokeWidth={1.8} />
        <svg viewBox="0 0 18 14" className="ml-[6px] h-3.5 w-[18px]" fill="none" stroke="#fff" strokeWidth="1.300">
          <path d="M7 3h6.500q2 0 2 2v5q0 2-2 2h-9q-2 0-2-2V8" />
          <path d="M16.500 6v3" strokeWidth="2" />
          <path d="M7.500 5.500h5.500v4H5z" fill="#fff" />
          <path d="M5 0 2 5h2.500L3 9l4-5H4.500z" fill="#fff" stroke="none" />
        </svg>
        <div className="ml-[14px] w-[65px] text-right whitespace-nowrap">
          <div>09:31</div>
          <div>16-02-2025</div>
        </div>
      </div>
    </div>
  );
}

export default function App() {
  return (
    <div className="flex h-[1398px] w-[2549px] flex-col overflow-hidden bg-[#1c1116]">
      <BrowserBar />
      <div className="h-0.5 bg-linear-to-r from-[#ff4b4b] to-[#fffd80]" />
      <StreamlitPage />
      <Taskbar />
    </div>
  );
}
